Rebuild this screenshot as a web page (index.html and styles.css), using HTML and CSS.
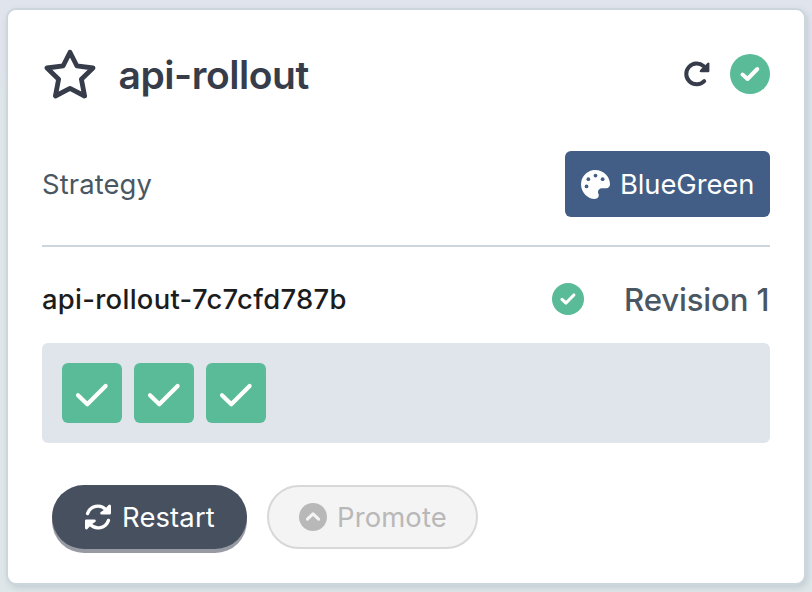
FILE: index.html
```html
<!DOCTYPE html>
<html lang="en">
<head>
<meta charset="utf-8">
<title>api-rollout</title>
<link rel="stylesheet" href="styles.css">
</head>
<body>
<main class="card">
  <header class="header">
    <svg class="star" viewBox="0 0 52 52"><path d="M26 4.2 L32.8 17.8 L49 20 L37.4 31.2 L40.6 48 L26 40.4 L11.4 48 L14.6 31.2 L3 20 L19.2 17.8 Z"/></svg>
    <h1 class="title">api-rollout</h1>
    <svg class="reload" viewBox="0 0 28 28"><path class="arc" d="M21.2 21.1 A10.4 10.4 0 1 1 20.5 6.1"/><path class="head" d="M26.4 3.2 V11 Q26.4 12.2 25.2 12.2 H17.8 Q16 12 17 10.2 L19 8 L22 5.4 L24.4 3 Q26 2 26.4 3.2 Z"/></svg>
    <svg class="status status-large" viewBox="0 0 40 40"><circle cx="20" cy="20" r="20"/><path d="M12.5 20.5 L17.5 25 L27.3 15"/></svg>
  </header>
  <section class="strategy">
    <span class="label">Strategy</span>
    <span class="tag">
      <svg class="palette" viewBox="0 0 512 512"><path d="M204 6C105 25 26 104 6 203c-37 187 131 326 258 306 41-6 61-54 43-91-23-46 10-98 61-98h80c35 0 64-30 64-65C512 98 365-25 204 6z"/><g><circle cx="98" cy="290" r="33"/><circle cx="130" cy="162" r="33"/><circle cx="256" cy="98" r="33"/><circle cx="382" cy="162" r="33"/></g></svg>
      <span class="tag-text">BlueGreen</span>
    </span>
  </section>
  <section class="revision">
    <span class="name">api-rollout-7c7cfd787b</span>
    <svg class="status status-small" viewBox="0 0 40 40"><circle cx="20" cy="20" r="20"/><path d="M12.5 20.5 L17.5 25 L27.3 15"/></svg>
    <span class="number">Revision 1</span>
  </section>
  <section class="pods">
    <span class="pod"><svg viewBox="0 0 60 60"><path d="M16 32.3 L25.3 41.3 L43.6 23"/></svg></span>
    <span class="pod"><svg viewBox="0 0 60 60"><path d="M16 32.3 L25.3 41.3 L43.6 23"/></svg></span>
    <span class="pod"><svg viewBox="0 0 60 60"><path d="M16 32.3 L25.3 41.3 L43.6 23"/></svg></span>
  </section>
  <footer class="actions">
    <button class="button restart">
      <svg viewBox="0 0 28 28"><path d="M3.6 10.6 A10.8 10.8 0 0 1 21.8 6.6 L23.4 8.6 M24.4 17.4 A10.8 10.8 0 0 1 6.2 21.4 L4.6 19.4"/><path class="head" d="M25.6 3 V10.2 H17.6 L21 8 Z M2.4 25 V17.8 H10.4 L7 20 Z"/></svg>
      <span class="restart-text">Restart</span>
    </button>
    <button class="button promote" disabled>
      <svg viewBox="0 0 28 28"><circle cx="14" cy="14" r="14"/><path d="M8.4 16.2 L14 10.8 L19.6 16.2"/></svg>
      <span class="promote-text">Promote</span>
    </button>
  </footer>
</main>
</body>
</html>
```
FILE: styles.css
```css
* { box-sizing: border-box; }
body {
  margin: 0;
  padding: 8px 6px;
  height: 592px;
  overflow: hidden;
  background: linear-gradient(#e0e4ec 0, #e0e4ec 70px, #dee6e9 95px);
  font-family: Inter, "Liberation Sans", sans-serif;
  font-size: 27.4px;
}
svg { display: block; flex: none; }
.card {
  width: 800px;
  height: 577px;
  padding: 0 34px;
  border: 2px solid #ccd6dd;
  border-radius: 10px;
  background: #fff;
  box-shadow: 2px 3px 6px rgba(100, 120, 135, .22);
}
.header { display: flex; align-items: center; height: 40px; margin-top: 44px; }
.star { width: 52px; height: 52px; margin-left: 2px; fill: none; stroke: #363c4a; stroke-width: 4.8; stroke-linejoin: round; }
.title { margin: 0 auto 0 22.5px; padding-top: 2px; color: #363c4a; font-size: 39px; font-weight: 600; line-height: 48px; letter-spacing: -.45px; }
.reload { width: 28px; height: 28px; margin-right: 19.5px; }
.reload .arc { fill: none; stroke: #363c4a; stroke-width: 4; stroke-linecap: round; }
.reload .head { fill: #363c4a; }
.status circle { fill: #5abb98; }
.status path { fill: none; stroke: #fff; stroke-width: 4; stroke-linecap: round; stroke-linejoin: round; }
.status-large { width: 40px; height: 40px; }
.status-small { width: 32px; height: 32px; }
.strategy {
  display: flex;
  align-items: center;
  justify-content: space-between;
  height: 153px;
  padding: 57px 0 28px;
  border-bottom: 2px solid #ccd6dd;
}
.label { padding-bottom: 1px; color: #495763; letter-spacing: .1px; }
.tag {
  display: flex;
  align-items: center;
  width: 205px;
  height: 66px;
  padding-left: 16px;
  border-radius: 6px;
  background: #425d86;
  color: #fff;
}
.tag-text { padding-bottom: 1px; letter-spacing: -.1px; }
.palette { width: 29px; height: 29px; margin-right: 10px; fill: #fff; }
.palette g { fill: #425d86; }
.revision { display: flex; align-items: center; height: 32px; margin: 36px 0 28px; }
.name { margin-right: auto; padding-bottom: 1px; color: #1c1c1c; white-space: nowrap; font-weight: 500; letter-spacing: .3px; }
.number { width: 146px; margin-left: 40px; padding-top: 2px; color: #495763; font-size: 31.2px; font-weight: 500; letter-spacing: -.15px; white-space: nowrap; }
.pods { display: flex; gap: 12px; height: 100px; padding: 20px; border-radius: 6px; background: #e0e5ec; }
.pod { width: 60px; height: 60px; border-radius: 6px; background: #5abb98; }
.pod path { fill: none; stroke: #fff; stroke-width: 4.2; stroke-linecap: round; stroke-linejoin: round; }
.actions { display: flex; gap: 20px; padding: 42px 10px 0; }
.button {
  display: flex;
  align-items: center;
  height: 64px;
  padding: 0;
  border: 0;
  border-radius: 32px;
  font: inherit;
}
.button svg { width: 28px; height: 28px; }
.restart { width: 195px; padding-left: 32px; gap: 10px; background: #47505f; color: #fff; box-shadow: 0 4px #979aa2; }
.restart-text, .promote-text { padding-bottom: 1px; letter-spacing: .15px; }
.restart svg { fill: none; stroke: #fff; stroke-width: 3.4; stroke-linecap: round; stroke-linejoin: round; }
.restart .head { fill: #fff; stroke-width: 2.8; }
.promote { width: 211px; padding-left: 30px; gap: 10px; border: 2px solid #d8d8d8; background: #f4f4f4; color: #b8b8b8; }
.promote circle { fill: #b8b8b8; }
.promote path { fill: none; stroke: #f4f4f4; stroke-width: 3; stroke-linecap: round; stroke-linejoin: round; }
```
